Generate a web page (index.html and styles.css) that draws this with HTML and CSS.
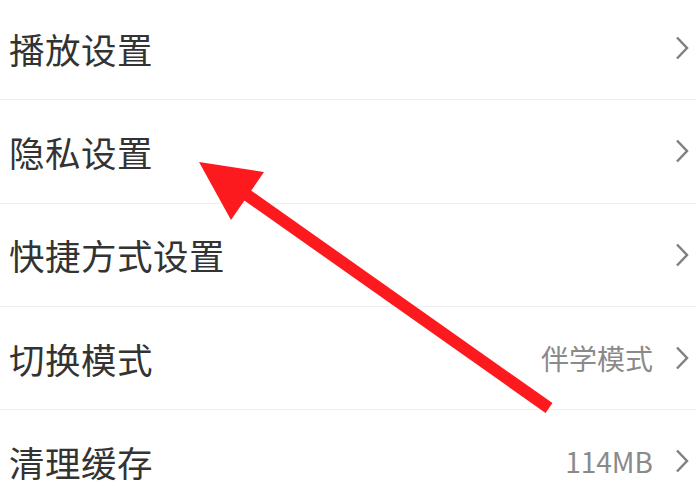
FILE: index.html
```html
<!DOCTYPE html>
<html lang="zh">
<head>
<meta charset="utf-8">
<link rel="stylesheet" href="styles.css">
</head>
<body>
<div class="page">
  <ul class="list">
    <li class="row"><span class="label">播放设置</span><span class="meta"><svg class="chev" width="14" height="24" viewBox="0 0 14 24"><polyline points="2,1.5 12,12 2,22.5"/></svg></span></li>
    <li class="row"><span class="label">隐私设置</span><span class="meta"><svg class="chev" width="14" height="24" viewBox="0 0 14 24"><polyline points="2,1.5 12,12 2,22.5"/></svg></span></li>
    <li class="row"><span class="label">快捷方式设置</span><span class="meta"><svg class="chev" width="14" height="24" viewBox="0 0 14 24"><polyline points="2,1.5 12,12 2,22.5"/></svg></span></li>
    <li class="row"><span class="label">切换模式</span><span class="meta"><span class="value">伴学模式</span><svg class="chev" width="14" height="24" viewBox="0 0 14 24"><polyline points="2,1.5 12,12 2,22.5"/></svg></span></li>
    <li class="row"><span class="label">清理缓存</span><span class="meta"><span class="value">114MB</span><svg class="chev" width="14" height="24" viewBox="0 0 14 24"><polyline points="2,1.5 12,12 2,22.5"/></svg></span></li>
  </ul>
  <svg class="arrow" width="700" height="500" viewBox="0 0 700 500">
    <line x1="240" y1="190" x2="549" y2="408" stroke="#fd1a1f" stroke-width="12"/>
    <polygon points="199,162 264,172 231,220" fill="#fd1a1f"/>
  </svg>
</div>
</body>
</html>
```
FILE: styles.css
```css
html, body {
  margin: 0;
  padding: 0;
  background: #fff;
}
.page {
  position: relative;
  width: 700px;
  height: 500px;
  overflow: hidden;
  font-family: "Noto Sans CJK SC", "Noto Sans", sans-serif;
}
.list {
  list-style: none;
  margin: -4px 0 0 0;
  padding: 0;
  border-top: 1px solid #f1f1f1;
}
.row {
  height: 102.33px;
  border-bottom: 1px solid #efefef;
  display: flex;
  align-items: center;
  justify-content: space-between;
  padding: 0 7px 0 9px;
  margin-right: 4px;
}
.label {
  font-size: 35.5px;
  color: #333;
  letter-spacing: 0.5px;
}
.meta {
  display: flex;
  align-items: center;
  gap: 22px;
}
.value {
  font-size: 28px;
  color: #8a8a8a;
}
.chev {
  display: block;
  fill: none;
  stroke: #808080;
  stroke-width: 2.5;
}
.arrow {
  position: absolute;
  left: 0;
  top: 0;
}
```
